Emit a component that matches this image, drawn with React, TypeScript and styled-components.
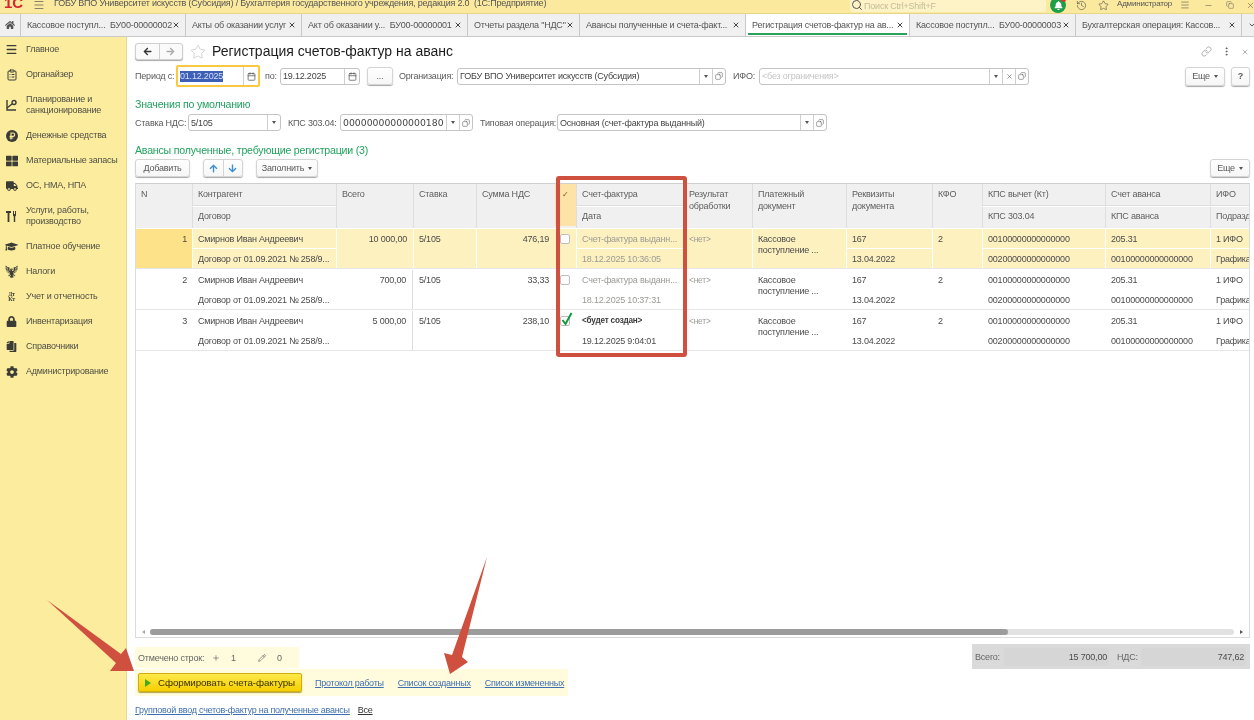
import React from "react";
import styled, { createGlobalStyle } from "styled-components";
import {
  Calendar,
  ChevronDown,
  ClipboardList,
  Copy,
  History,
  Link as LinkIcon,
  Menu,
  Minus,
  MoreVertical,
  Pencil,
  Plus,
  Search,
  Star,
  X,
} from "lucide-react";
import {
  FaArrowDown,
  FaArrowLeft,
  FaArrowRight,
  FaArrowUp,
  FaBell,
  FaCog,
  FaCopy,
  FaGraduationCap,
  FaHome,
  FaLock,
  FaThLarge,
  FaTruck,
} from "react-icons/fa";
import { GiEagleEmblem } from "react-icons/gi";

const GlobalStyle = createGlobalStyle`
  html, body {
    margin: 0;
    padding: 0;
    background: #fff;
  }
  * {
    box-sizing: border-box;
  }
  body {
    font-family: "Liberation Sans", Arial, sans-serif;
    font-size: 9px;
    letter-spacing: -0.2px;
    color: #4b4b4b;
  }
`;

const Page = styled.div`
  position: relative;
  width: 1254px;
  height: 720px;
  overflow: hidden;
  display: flex;
  flex-direction: column;
  filter: blur(0.4px);
`;

/* top window bar */
const TitleBar = styled.div`
  height: 13px;
  flex: none;
  display: flex;
  align-items: flex-start;
  background: #fbe99e;
  overflow: hidden;
`;

const Logo = styled.span`
  width: 33px;
  flex: none;
  padding-left: 4px;
  color: #d6262c;
  font-weight: bold;
  font-size: 15px;
  line-height: 6px;
  letter-spacing: 0;
`;

const BarIcon = styled.span<{ $w: number }>`
  width: ${(p) => p.$w}px;
  height: 13px;
  flex: none;
  display: flex;
  align-items: center;
  justify-content: center;
  color: #555;
  svg {
    margin-top: -3px;
  }
`;

const WindowTitle = styled.span`
  flex: none;
  width: 796px;
  line-height: 7px;
  color: #555;
  white-space: pre;
`;

const SearchBox = styled.div`
  width: 196px;
  height: 12px;
  flex: none;
  display: flex;
  align-items: center;
  gap: 1px;
  padding-left: 1px;
  background: #fdf3c6;
  border-radius: 0 0 3px 3px;
  color: #c4bc9c;
  line-height: 7px;
  svg {
    color: #555;
    margin-top: -3px;
  }
`;

const Bell = styled.span`
  position: relative;
  width: 16px;
  height: 16px;
  margin: -3px 0 0 4px;
  flex: none;
  display: flex;
  align-items: center;
  justify-content: center;
  border-radius: 50%;
  background: #1f9e4a;
  color: #fff;
  &::after {
    content: "";
    position: absolute;
    top: 0;
    right: 0;
    width: 5px;
    height: 5px;
    border-radius: 50%;
    background: #e0332c;
  }
`;

const UserName = styled.span`
  width: 62px;
  flex: none;
  line-height: 7px;
  font-size: 8px;
  color: #555;
  white-space: nowrap;
`;

/* tab strip */
const TabStrip = styled.div`
  height: 24px;
  flex: none;
  display: flex;
  background: #f0f0f0;
  border-top: 1px solid #e6d68a;
  border-bottom: 1px solid #c9c9c9;
`;

const HomeTab = styled.div`
  width: 21px;
  flex: none;
  display: flex;
  align-items: center;
  justify-content: center;
  color: #555;
  border-right: 1px solid #c9c9c9;
`;

const Tab = styled.div<{ $w: number; $active?: boolean }>`
  position: relative;
  width: ${(p) => p.$w}px;
  flex: none;
  display: flex;
  align-items: center;
  justify-content: space-between;
  padding: 0 5px 0 6px;
  background: ${(p) => (p.$active ? "#fff" : "#f0f0f0")};
  border-right: 1px solid #c9c9c9;
  color: #555;
  white-space: pre;
  ${(p) =>
    p.$active &&
    `&::after {
      content: "";
      position: absolute;
      left: 2px;
      right: 2px;
      bottom: 1px;
      height: 2px;
      background: #2aa05a;
    }`}
  svg {
    flex: none;
    color: #444;
  }
`;

const Body = styled.div`
  flex: 1;
  min-height: 0;
  display: flex;
`;

/* section panel */
const Sidebar = styled.nav`
  width: 127px;
  flex: none;
  display: flex;
  flex-direction: column;
  background: #fbec9e;
  border-right: 1px solid #e8d88e;
`;

const SideItem = styled.div<{ $tall?: boolean }>`
  height: ${(p) => (p.$tall ? 36 : 25)}px;
  flex: none;
  display: flex;
  align-items: center;
  line-height: 11.5px;
  color: #4f4f45;
`;

const SideIcon = styled.span`
  width: 26px;
  flex: none;
  display: flex;
  justify-content: center;
  padding-right: 3px;
  color: #3c3c36;
`;

const DebitCredit = styled.span`
  display: block;
  font-family: "Liberation Serif", serif;
  font-size: 6px;
  font-weight: bold;
  line-height: 5px;
  text-align: center;
`;

const Main = styled.main`
  flex: 1;
  min-width: 0;
  padding: 6px 4px 0 8px;
  display: flex;
  flex-direction: column;
  background: #fff;
`;

const HeadRow = styled.div`
  height: 17px;
  flex: none;
  display: flex;
  align-items: center;
`;

const NavGroup = styled.div`
  width: 48px;
  height: 17px;
  flex: none;
  display: flex;
  border: 1px solid #d0d0d0;
  border-radius: 3px;
  box-shadow: 0 1px 1px #aaa;
  background: #fafafa;
`;

const NavButton = styled.span<{ $off?: boolean; $line?: boolean }>`
  flex: 1;
  display: flex;
  align-items: center;
  justify-content: center;
  color: ${(p) => (p.$off ? "#aaa" : "#333")};
  ${(p) => p.$line && "border-left: 1px solid #d0d0d0;"}
`;

const FormTitle = styled.h1`
  margin: 0 0 0 6px;
  padding-bottom: 2px;
  font-size: 14px;
  font-weight: normal;
  letter-spacing: 0;
  color: #1c1c1c;
  flex: 1;
  white-space: nowrap;
`;

const HeadTools = styled.div`
  display: flex;
  align-items: center;
  gap: 9px;
  color: #888;
  padding-right: 1px;
`;

const FormRow = styled.div<{ $mt: number; $h: number }>`
  height: ${(p) => p.$h}px;
  margin-top: ${(p) => p.$mt}px;
  flex: none;
  display: flex;
  align-items: center;
`;

const Label = styled.label<{ $w: number; $ml?: number }>`
  width: ${(p) => p.$w}px;
  margin-left: ${(p) => p.$ml ?? 0}px;
  flex: none;
  color: #5a5a5a;
  white-space: nowrap;
`;

const Focus = styled.div`
  width: 84px;
  height: 22px;
  flex: none;
  display: flex;
  border: 2px solid #fbc93f;
  border-radius: 2px;
`;

const Field = styled.div<{ $w?: number; $ml?: number; $bare?: boolean }>`
  width: ${(p) => (p.$w ? `${p.$w}px` : "100%")};
  height: ${(p) => (p.$bare ? "100%" : "17px")};
  margin-left: ${(p) => p.$ml ?? 0}px;
  flex: none;
  display: flex;
  align-items: stretch;
  background: #fff;
  border: ${(p) => (p.$bare ? "0" : "1px solid #c4c4c4")};
  border-radius: 3px;
  overflow: hidden;
`;

const FieldText = styled.span<{ $mono?: boolean; $hint?: boolean }>`
  flex: 1;
  min-width: 0;
  padding-left: 2px;
  display: flex;
  align-items: center;
  white-space: nowrap;
  overflow: hidden;
  color: ${(p) => (p.$hint ? "#c4c4c4" : "#444")};
  ${(p) => p.$mono && "font-family: 'DejaVu Sans', sans-serif; font-size: 9.3px; letter-spacing: 0;"}
`;

const Selected = styled.span`
  background: #3c5fb8;
  color: #d8dff5;
  line-height: 11px;
`;

const FieldButton = styled.span<{ $w?: number }>`
  width: ${(p) => p.$w ?? 13}px;
  flex: none;
  display: flex;
  align-items: center;
  justify-content: center;
  border-left: 1px solid #cfcfcf;
  color: #555;
`;

const Caret = styled.span`
  width: 0;
  height: 0;
  border-left: 2px solid transparent;
  border-right: 2px solid transparent;
  border-top: 3px solid #555;
`;

const Button = styled.button<{ $w: number; $h?: number; $ml?: number }>`
  width: ${(p) => p.$w}px;
  height: ${(p) => p.$h ?? 18}px;
  margin-left: ${(p) => p.$ml ?? 0}px;
  flex: none;
  padding: 0;
  display: inline-flex;
  align-items: center;
  justify-content: center;
  gap: 4px;
  font: inherit;
  letter-spacing: inherit;
  color: #5a5a5a;
  background: linear-gradient(#fff, #f6f6f6);
  border: 1px solid #d4d4d4;
  border-radius: 3px;
  box-shadow: 0 1px 1px #a8a8a8;
`;

const Push = styled.div`
  flex: 1;
`;

const Section = styled.h2<{ $mt: number }>`
  height: 16px;
  margin: ${(p) => p.$mt}px 0 0;
  flex: none;
  font-size: 10.6px;
  line-height: 16px;
  font-weight: normal;
  color: #22a25f;
`;

const ArrowPair = styled.div`
  width: 40px;
  height: 18px;
  margin-left: 13px;
  flex: none;
  display: flex;
  background: linear-gradient(#fff, #f6f6f6);
  border: 1px solid #d4d4d4;
  border-radius: 3px;
  box-shadow: 0 1px 1px #a8a8a8;
`;

const ArrowButton = styled.span<{ $line?: boolean }>`
  flex: 1;
  display: flex;
  align-items: center;
  justify-content: center;
  color: #3d8fd0;
  ${(p) => p.$line && "border-left: 1px solid #d4d4d4;"}
`;

/* the table */
const columns = "56px 144px 77px 63px 79px 21px 107px 69px 94px 86px 50px 123px 105px 40px";

const Table = styled.section`
  height: 455px;
  margin-top: 6px;
  flex: none;
  display: flex;
  flex-direction: column;
  border: 1px solid #dcdcdc;
  border-top-color: #cfcfcf;
  overflow: hidden;
`;

const HeaderGrid = styled.div`
  height: 44px;
  flex: none;
  display: grid;
  grid-template-columns: ${columns};
  grid-template-rows: 22px 22px;
  background: #f0f0f0;
`;

const HeaderCell = styled.div<{ $tall?: boolean; $tick?: boolean; $sub?: boolean; $first?: boolean }>`
  ${(p) => p.$tall && "grid-row: span 2;"}
  padding: ${(p) => (p.$sub ? "0 5px 2px" : "5px 5px 0")};
  display: flex;
  align-items: ${(p) => (p.$sub ? "center" : "flex-start")};
  line-height: 11.5px;
  color: #5e5e5e;
  white-space: ${(p) => (p.$tall ? "normal" : "nowrap")};
  overflow: hidden;
  border-left: ${(p) => (p.$first ? "0" : "1px solid #dedede")};
  ${(p) => !p.$tall && !p.$sub && "border-bottom: 1px solid #dedede;"}
  ${(p) => p.$sub && "border-top: 1px solid #fff;"}
  ${(p) => p.$tick && "background: #fde3a8; justify-content: center; padding: 5px 0 0; margin-bottom: 2px; border-left: 0; color: #6b5a2a; font-size: 8px;"}
`;

const DataRow = styled.div<{ $sel?: boolean }>`
  height: 41px;
  padding-top: 1px;
  flex: none;
  display: grid;
  grid-template-columns: ${columns};
  grid-template-rows: 20px 19px;
  border-bottom: 1px solid #e6e6e6;
  background: ${(p) => (p.$sel ? "#fef1c0" : "#fff")};
  background-clip: content-box;
`;

const Cell = styled.div<{
  $tall?: boolean;
  $right?: boolean;
  $sel?: boolean;
  $low?: boolean;
  $line?: boolean;
  $tone?: "muted" | "bold";
}>`
  ${(p) => p.$tall && "grid-row: span 2;"}
  min-width: 0;
  padding: ${(p) => (p.$tall ? "5px 6px 0" : "0 6px")};
  line-height: ${(p) => (p.$tall ? "11px" : "20px")};
  text-align: ${(p) => (p.$right ? "right" : "left")};
  white-space: ${(p) => (p.$tall ? "normal" : "nowrap")};
  overflow: hidden;
  color: ${(p) => (p.$tone === "muted" ? "#9b9b94" : "#4b4b4b")};
  ${(p) => p.$tone === "bold" && "font-weight: bold; font-size: 8.2px; color: #3a3a3a;"}
  ${(p) => p.$sel && p.$tall && "box-shadow: inset 1px 0 0 #fff;"}
  ${(p) => p.$sel && p.$low && "box-shadow: inset 1px 0 0 #fff;"}
  ${(p) => p.$sel && !p.$tall && !p.$low && "box-shadow: inset 1px 0 0 #fff, inset 0 -1px 0 #fff;"}
  ${(p) => p.$line && "border-right: 1px solid #dedede;"}
`;

const NumberCell = styled(Cell)<{ $current?: boolean }>`
  ${(p) => p.$current && "background: #fde28a;"}
  padding-right: 5px;
`;

const Nil = styled.span`
  font-size: 8.4px;
  color: #9b9b94;
`;

const CheckCell = styled.div`
  grid-row: span 2;
  padding: 5px 0 0 5px;
`;

const CheckBox = styled.span`
  position: relative;
  display: block;
  width: 10px;
  height: 10px;
  background: #fff;
  border: 1px solid #bdbdbd;
  border-radius: 2px;
`;

const CheckMark = styled.svg`
  position: absolute;
  left: 0;
  top: -5px;
`;

const Spacer = styled.div`
  flex: 1;
`;

const ScrollRow = styled.div`
  height: 7px;
  margin-bottom: 2px;
  flex: none;
  display: flex;
  align-items: center;
  padding: 0 6px;
  color: #888;
`;

const ScrollEnd = styled.span<{ $dir: "left" | "right" }>`
  width: 0;
  height: 0;
  flex: none;
  border-top: 2px solid transparent;
  border-bottom: 2px solid transparent;
  ${(p) => (p.$dir === "left" ? "border-right: 3px solid #aaa;" : "border-left: 3px solid #555;")}
`;

const ScrollTrack = styled.div`
  flex: 1;
  height: 6px;
  margin: 0 6px 0 5px;
  border-radius: 3px;
  background: #e2e2e2;
`;

const ScrollThumb = styled.div<{ $w: number }>`
  width: ${(p) => p.$w}px;
  height: 100%;
  border-radius: 3px;
  background: #9c9c9c;
`;

/* bottom of the form */
const Footer = styled.footer`
  flex: none;
  display: flex;
  justify-content: space-between;
  align-items: flex-start;
`;

const FooterLeft = styled.div`
  margin-top: 9px;
  display: flex;
  flex-direction: column;
  align-items: flex-start;
`;

const Marked = styled.div`
  width: 164px;
  height: 21px;
  display: flex;
  align-items: center;
  padding-left: 3px;
  background: #fffbdc;
  color: #666;
`;

const MarkedItem = styled.span<{ $w: number }>`
  width: ${(p) => p.$w}px;
  padding-left: ${(p) => (p.$w < 60 ? 2 : 0)}px;
  flex: none;
  display: inline-flex;
  align-items: center;
  gap: 11px;
  white-space: nowrap;
`;

const ActionBar = styled.div`
  width: 433px;
  height: 27px;
  margin-top: 1px;
  padding-left: 3px;
  display: flex;
  align-items: center;
  background: #fffbdc;
`;

const PrimaryButton = styled.button`
  width: 164px;
  height: 19px;
  flex: none;
  padding: 0 0 0 6px;
  display: flex;
  align-items: center;
  gap: 7px;
  font: inherit;
  font-size: 9.8px;
  letter-spacing: -0.1px;
  white-space: nowrap;
  color: #3b3300;
  background: linear-gradient(#ffe94a, #f5cf00);
  border: 1px solid #d0ad10;
  border-radius: 2px;
  box-shadow: 0 1px 1px #b5a24a;
`;

const Play = styled.span`
  width: 0;
  height: 0;
  flex: none;
  border-top: 4px solid transparent;
  border-bottom: 4px solid transparent;
  border-left: 6px solid #4aa81c;
`;

const FootLink = styled.a<{ $ml?: number; $plain?: boolean }>`
  margin-left: ${(p) => p.$ml ?? 0}px;
  color: ${(p) => (p.$plain ? "#333" : "#3f6fb0")};
  letter-spacing: -0.25px;
  text-decoration: underline;
  white-space: nowrap;
`;

const LinkLine = styled.div`
  height: 14px;
  margin-top: 7px;
  display: flex;
  align-items: center;
`;

const Totals = styled.div`
  width: 278px;
  height: 25px;
  margin-top: 6px;
  padding: 0 4px 0 3px;
  display: flex;
  align-items: center;
  background: #dadada;
  color: #666;
`;

const TotalLabel = styled.span<{ $w: number; $ml?: number }>`
  width: ${(p) => p.$w}px;
  margin-left: ${(p) => p.$ml ?? 0}px;
  flex: none;
`;

const TotalField = styled.div`
  width: 105px;
  height: 18px;
  flex: none;
  display: flex;
  align-items: center;
  justify-content: flex-end;
  padding-right: 2px;
  border-radius: 3px;
  background: #d6d6d6;
  color: #4b4b4b;
`;

/* annotations drawn over the screenshot */
const RedFrame = styled.div`
  position: absolute;
  left: 556px;
  top: 176px;
  width: 131px;
  height: 181px;
  border: 4px solid #d0503f;
  border-radius: 3px;
  pointer-events: none;
`;

const Annotations = styled.svg`
  position: absolute;
  left: 0;
  top: 0;
  pointer-events: none;
`;

const tabs = [
  { w: 165, left: "Кассовое поступл...  БУ00-00000002" },
  { w: 116, left: "Акты об оказании услуг" },
  { w: 166, left: "Акт об оказании у...  БУ00-00000001" },
  { w: 112, left: 'Отчеты раздела "НДС"' },
  { w: 166, left: "Авансы полученные и счета-факт..." },
  { w: 164, left: "Регистрация счетов-фактур на ав...", active: true },
  { w: 166, left: "Кассовое поступл...  БУ00-00000003" },
  { w: 166, left: "Бухгалтерская операция: Кассов..." },
];

const PlanIcon = () => (
  <svg width="13" height="13" viewBox="0 0 13 13" fill="none" stroke="currentColor" strokeWidth="1.4">
    <path d="M2 1v10h9" />
    <circle cx="9" cy="3.5" r="2" />
    <path d="M2 9l5-4" />
  </svg>
);

const RubleIcon = () => (
  <svg width="12" height="12" viewBox="0 0 12 12">
    <circle cx="6" cy="6" r="6" fill="currentColor" />
    <path d="M5 9.5V3h2a1.6 1.6 0 0 1 0 3.4H3.6M3.6 8h3.6" fill="none" stroke="#fbec9e" strokeWidth="1.1" />
  </svg>
);

const ToolsIcon = () => (
  <svg width="11" height="13" viewBox="0 0 11 13" fill="currentColor">
    <path d="M0 1h5v2H3.4v9H1.6V3H0zM7 1h1v3h1V1h1v4.5L9.2 6.500V12H7.800V6.500L7 5.500z" />
  </svg>
);

const sideItems: { label: React.ReactNode; icon: React.ReactNode; tall?: boolean }[] = [
  { label: "Главное", icon: <Menu size={13} strokeWidth={2.4} /> },
  { label: "Органайзер", icon: <ClipboardList size={12} strokeWidth={2} /> },
  { label: <>Планирование и<br />санкционирование</>, icon: <PlanIcon />, tall: true },
  { label: "Денежные средства", icon: <RubleIcon /> },
  { label: "Материальные запасы", icon: <FaThLarge size={12} /> },
  { label: "ОС, НМА, НПА", icon: <FaTruck size={12} /> },
  { label: <>Услуги, работы,<br />производство</>, icon: <ToolsIcon />, tall: true },
  { label: "Платное обучение", icon: <FaGraduationCap size={13} /> },
  { label: "Налоги", icon: <GiEagleEmblem size={13} /> },
  {
    label: "Учет и отчетность",
    icon: (
      <span>
        <DebitCredit>Дт</DebitCredit>
        <DebitCredit>Кт</DebitCredit>
      </span>
    ),
  },
  { label: "Инвентаризация", icon: <FaLock size={11} /> },
  { label: "Справочники", icon: <FaCopy size={11} style={{ transform: "scaleX(-1)" }} /> },
  { label: "Администрирование", icon: <FaCog size={12} /> },
];

const rows = [
  { n: 1, total: "10 000,00", vat: "476,19", done: false, sel: true, doc: "Счет-фактура выданн...", date: "18.12.2025 10:36:05" },
  { n: 2, total: "700,00", vat: "33,33", done: false, sel: false, doc: "Счет-фактура выданн...", date: "18.12.2025 10:37:31" },
  { n: 3, total: "5 000,00", vat: "238,10", done: true, sel: false, doc: "<будет создан>", date: "19.12.2025 9:04:01" },
];

const OpenIcon = () => <Copy size={8} strokeWidth={1.6} style={{ transform: "scaleX(-1)" }} />;

const CalendarButton = () => (
  <FieldButton $w={15}>
    <Calendar size={9} strokeWidth={2} />
  </FieldButton>
);

export default function App() {
  return (
    <Page>
      <GlobalStyle />
      <TitleBar>
        <Logo>1С</Logo>
        <BarIcon $w={12}>
          <Menu size={12} strokeWidth={1.4} />
        </BarIcon>
        <BarIcon $w={9} />
        <WindowTitle>
          ГОБУ ВПО Университет искусств (Субсидия) / Бухгалтерия государственного учреждения, редакция 2.0  (1С:Предприятие)
        </WindowTitle>
        <SearchBox>
          <Search size={12} />
          Поиск Ctrl+Shift+F
        </SearchBox>
        <Bell>
          <FaBell size={9} />
        </Bell>
        <BarIcon $w={30}>
          <History size={11} strokeWidth={1.4} />
        </BarIcon>
        <BarIcon $w={14}>
          <Star size={11} strokeWidth={1.4} />
        </BarIcon>
        <BarIcon $w={7} />
        <UserName>Администратор</UserName>
        <BarIcon $w={12}>
          <Menu size={10} strokeWidth={1.4} />
        </BarIcon>
        <BarIcon $w={34}>
          <Minus size={9} strokeWidth={1.4} />
        </BarIcon>
        <BarIcon $w={10}>
          <Copy size={8} strokeWidth={1.4} />
        </BarIcon>
        <BarIcon $w={30}>
          <X size={9} strokeWidth={1.4} />
        </BarIcon>
      </TitleBar>
      <TabStrip>
        <HomeTab>
          <FaHome size={10} />
        </HomeTab>
        {tabs.map((tab) => (
          <Tab key={tab.left} $w={tab.w} $active={tab.active}>
            <span>{tab.left}</span>
            <X size={8} strokeWidth={3} />
          </Tab>
        ))}
        <HomeTab>
          <ChevronDown size={8} strokeWidth={3} />
        </HomeTab>
      </TabStrip>
      <Body>
        <Sidebar>
          {sideItems.map((item, i) => (
            <SideItem key={i} $tall={item.tall}>
              <SideIcon>{item.icon}</SideIcon>
              <span>{item.label}</span>
            </SideItem>
          ))}
        </Sidebar>
        <Main>
          <HeadRow>
            <NavGroup>
              <NavButton>
                <FaArrowLeft size={9} />
              </NavButton>
              <NavButton $off $line>
                <FaArrowRight size={9} />
              </NavButton>
            </NavGroup>
            <Star size={16} strokeWidth={1} color="#bdbdbd" style={{ marginLeft: 7 }} />
            <FormTitle>Регистрация счетов-фактур на аванс</FormTitle>
            <HeadTools>
              <LinkIcon size={11} strokeWidth={1.4} />
              <MoreVertical size={11} strokeWidth={2} color="#555" />
              <X size={8} strokeWidth={2} />
            </HeadTools>
          </HeadRow>
          <FormRow $mt={5} $h={22}>
            <Label $w={41}>Период с:</Label>
            <Focus>
              <Field $bare>
                <FieldText>
                  <Selected>01.12.2025</Selected>
                </FieldText>
                <CalendarButton />
              </Field>
            </Focus>
            <Label $w={15} $ml={5}>по:</Label>
            <Field $w={80}>
              <FieldText>19.12.2025</FieldText>
              <CalendarButton />
            </Field>
            <Button $w={26} $ml={7}>...</Button>
            <Label $w={58} $ml={6}>Организация:</Label>
            <Field $w={269}>
              <FieldText>ГОБУ ВПО Университет искусств (Субсидия)</FieldText>
              <FieldButton>
                <Caret />
              </FieldButton>
              <FieldButton>
                <OpenIcon />
              </FieldButton>
            </Field>
            <Label $w={26} $ml={7}>ИФО:</Label>
            <Field $w={270}>
              <FieldText $hint>&lt;без ограничения&gt;</FieldText>
              <FieldButton>
                <Caret />
              </FieldButton>
              <FieldButton>
                <X size={7} strokeWidth={2} />
              </FieldButton>
              <FieldButton>
                <OpenIcon />
              </FieldButton>
            </Field>
            <Push />
            <Button $w={40} $h={19}>
              Еще <Caret />
            </Button>
            <Button $w={19} $h={19} $ml={6}>
              <b>?</b>
            </Button>
          </FormRow>
          <Section $mt={9}>Значения по умолчанию</Section>
          <FormRow $mt={2} $h={17}>
            <Label $w={53}>Ставка НДС:</Label>
            <Field $w={93}>
              <FieldText>5/105</FieldText>
              <FieldButton>
                <Caret />
              </FieldButton>
            </Field>
            <Label $w={52} $ml={7}>КПС 303.04:</Label>
            <Field $w={133}>
              <FieldText $mono>00000000000000180</FieldText>
              <FieldButton>
                <Caret />
              </FieldButton>
              <FieldButton>
                <OpenIcon />
              </FieldButton>
            </Field>
            <Label $w={77} $ml={7}>Типовая операция:</Label>
            <Field $w={270}>
              <FieldText>Основная (счет-фактура выданный)</FieldText>
              <FieldButton>
                <Caret />
              </FieldButton>
              <FieldButton>
                <OpenIcon />
              </FieldButton>
            </Field>
          </FormRow>
          <Section $mt={11}>Авансы полученные, требующие регистрации (3)</Section>
          <FormRow $mt={1} $h={18}>
            <Button $w={55}>Добавить</Button>
            <ArrowPair>
              <ArrowButton>
                <FaArrowUp size={9} />
              </ArrowButton>
              <ArrowButton $line>
                <FaArrowDown size={9} />
              </ArrowButton>
            </ArrowPair>
            <Button $w={62} $ml={13}>
              Заполнить <Caret />
            </Button>
            <Push />
            <Button $w={40}>
              Еще <Caret />
            </Button>
          </FormRow>
          <Table>
            <HeaderGrid>
              <HeaderCell $tall $first>N</HeaderCell>
              <HeaderCell>Контрагент</HeaderCell>
              <HeaderCell $tall>Всего</HeaderCell>
              <HeaderCell $tall>Ставка</HeaderCell>
              <HeaderCell $tall>Сумма НДС</HeaderCell>
              <HeaderCell $tall $tick>✓</HeaderCell>
              <HeaderCell>Счет-фактура</HeaderCell>
              <HeaderCell $tall>Результат обработки</HeaderCell>
              <HeaderCell $tall>Платежный документ</HeaderCell>
              <HeaderCell $tall>Реквизиты документа</HeaderCell>
              <HeaderCell $tall>КФО</HeaderCell>
              <HeaderCell>КПС вычет (Кт)</HeaderCell>
              <HeaderCell>Счет аванса</HeaderCell>
              <HeaderCell>ИФО</HeaderCell>
              <HeaderCell $sub>Договор</HeaderCell>
              <HeaderCell $sub>Дата</HeaderCell>
              <HeaderCell $sub>КПС 303.04</HeaderCell>
              <HeaderCell $sub>КПС аванса</HeaderCell>
              <HeaderCell $sub>Подразд</HeaderCell>
            </HeaderGrid>
            {rows.map((row) => (
              <DataRow key={row.n} $sel={row.sel}>
                <NumberCell $tall $right $current={row.sel}>{row.n}</NumberCell>
                <Cell $sel={row.sel}>Смирнов Иван Андреевич</Cell>
                <Cell $tall $right $sel={row.sel} $line={!row.sel}>{row.total}</Cell>
                <Cell $tall $sel={row.sel}>5/105</Cell>
                <Cell $tall $right $sel={row.sel}>{row.vat}</Cell>
                <CheckCell>
                  <CheckBox>
                    {row.done && (
                      <CheckMark width="13" height="14" viewBox="0 0 13 14">
                        <path d="M1.500 8l3 4 6-11" fill="none" stroke="#109a3c" strokeWidth="2" />
                      </CheckMark>
                    )}
                  </CheckBox>
                </CheckCell>
                <Cell $sel={row.sel} $tone={row.done ? "bold" : "muted"}>{row.doc}</Cell>
                <Cell $tall $sel={row.sel}>
                  <Nil>&lt;нет&gt;</Nil>
                </Cell>
                <Cell $tall $sel={row.sel}>
                  Кассовое
                  <br />
                  поступление ...
                </Cell>
                <Cell $sel={row.sel}>167</Cell>
                <Cell $tall $sel={row.sel}>2</Cell>
                <Cell $sel={row.sel}>00100000000000000</Cell>
                <Cell $sel={row.sel}>205.31</Cell>
                <Cell $sel={row.sel}>1 ИФО</Cell>
                <Cell $low $sel={row.sel}>Договор от 01.09.2021 № 258/9...</Cell>
                <Cell $low $sel={row.sel} $tone={row.done ? undefined : "muted"}>{row.date}</Cell>
                <Cell $low $sel={row.sel}>13.04.2022</Cell>
                <Cell $low $sel={row.sel}>00200000000000000</Cell>
                <Cell $low $sel={row.sel}>00100000000000000</Cell>
                <Cell $low $sel={row.sel}>Графика</Cell>
              </DataRow>
            ))}
            <Spacer />
            <ScrollRow>
              <ScrollEnd $dir="left" />
              <ScrollTrack>
                <ScrollThumb $w={858} />
              </ScrollTrack>
              <ScrollEnd $dir="right" />
            </ScrollRow>
          </Table>
          <Footer>
            <FooterLeft>
              <Marked>
                <MarkedItem $w={72}>Отмечено строк:</MarkedItem>
                <MarkedItem $w={46}>
                  <Plus size={8} strokeWidth={2} />1
                </MarkedItem>
                <MarkedItem $w={30}>
                  <Pencil size={8} strokeWidth={2} />0
                </MarkedItem>
              </Marked>
              <ActionBar>
                <PrimaryButton>
                  <Play />
                  Сформировать счета-фактуры
                </PrimaryButton>
                <FootLink $ml={13}>Протокол работы</FootLink>
                <FootLink $ml={14}>Список созданных</FootLink>
                <FootLink $ml={14}>Список измененных</FootLink>
              </ActionBar>
              <LinkLine>
                <FootLink>Групповой ввод счетов-фактур на полученные авансы</FootLink>
                <FootLink $ml={8} $plain>Все</FootLink>
              </LinkLine>
            </FooterLeft>
            <Totals>
              <TotalLabel $w={29}>Всего:</TotalLabel>
              <TotalField>15 700,00</TotalField>
              <TotalLabel $w={24} $ml={8}>НДС:</TotalLabel>
              <TotalField>747,62</TotalField>
            </Totals>
          </Footer>
        </Main>
      </Body>
      <RedFrame />
      <Annotations width="1254" height="720" viewBox="0 0 1254 720">
        <path d="M47 600L121 654l5-6 8 23h-24l6-8z" fill="#d0503f" />
        <path d="M487 557L462 657l6 5-18 12-6-21 8 2z" fill="#d0503f" />
      </Annotations>
    </Page>
  );
}
